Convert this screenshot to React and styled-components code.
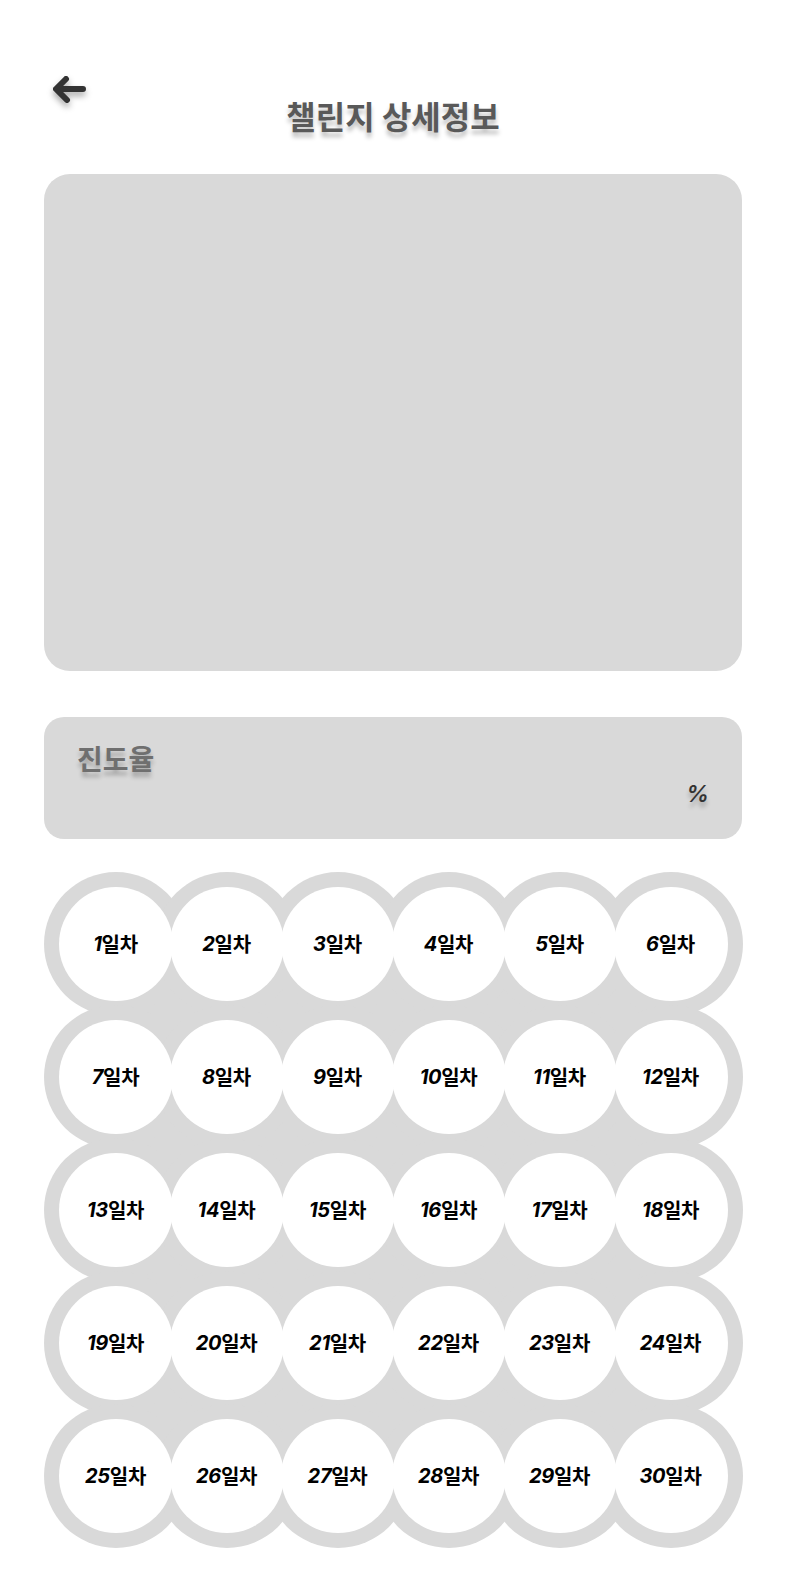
import React from "react";
import styled, { createGlobalStyle } from "styled-components";

const GlobalStyle = createGlobalStyle`
  body {
    margin: 0;
    background: #ffffff;
    font-family: "Noto Sans CJK KR", "Noto Sans", sans-serif;
  }
`;

const Page = styled.div`
  width: 786px;
  min-height: 1570px;
  padding: 0 44px;
  box-sizing: border-box;
  overflow: hidden;
`;

const Header = styled.header`
  position: relative;
  height: 174px;
  display: flex;
  justify-content: center;
`;

const BackButton = styled.button`
  position: absolute;
  left: 7px;
  top: 74px;
  width: 36px;
  height: 30px;
  padding: 0;
  border: none;
  background: none;
  cursor: pointer;
  filter: drop-shadow(0 4px 3px rgba(0, 0, 0, 0.35));
`;

const Title = styled.h1`
  margin: 92px 0 0;
  font-size: 32px;
  font-weight: 700;
  line-height: 46px;
  color: #595959;
  text-shadow: 0 5px 4px rgba(0, 0, 0, 0.25);
`;

const ImageCard = styled.div`
  height: 497px;
  border-radius: 26px;
  background: #d9d9d9;
`;

const ProgressCard = styled.div`
  margin-top: 46px;
  height: 122px;
  border-radius: 20px;
  background: #d9d9d9;
  padding: 21px 33px 0;
  box-sizing: border-box;
  display: flex;
  flex-direction: column;
`;

const ProgressLabel = styled.span`
  font-size: 28px;
  font-weight: 700;
  line-height: 40px;
  color: #6f6f6f;
  text-shadow: 0 5px 4px rgba(0, 0, 0, 0.25);
`;

const Percent = styled.span`
  align-self: flex-end;
  margin-top: 1px;
  font-family: "Inter", "Liberation Sans", sans-serif;
  font-style: italic;
  font-weight: 600;
  font-size: 23px;
  line-height: 30px;
  color: #333333;
  text-shadow: 0 5px 4px rgba(0, 0, 0, 0.25);
`;

const DayGrid = styled.div`
  margin-top: 38px;
  padding: 0 16px;
  display: grid;
  grid-template-columns: repeat(6, 111px);
  grid-auto-rows: 133px;
  background-image: linear-gradient(#d9d9d9, #d9d9d9);
  background-repeat: no-repeat;
  background-position: 71.5px 66.5px;
  background-size: 555px 532px;
`;

const DayRing = styled.div`
  margin: -5.5px -16.5px;
  height: 144px;
  border-radius: 50%;
  background: #d9d9d9;
  display: flex;
  align-items: center;
  justify-content: center;
`;

const DayInner = styled.div`
  position: relative;
  width: 114px;
  height: 114px;
  border-radius: 50%;
  background: #ffffff;
  display: flex;
  align-items: center;
  justify-content: center;
  font-size: 20px;
  font-weight: 700;
  color: #000000;
  letter-spacing: -0.3px;
`;

const DayNum = styled.span`
  font-family: "Inter", "Liberation Sans", sans-serif;
  font-style: italic;
  font-weight: 700;
`;

function BackArrow() {
  return (
    <svg width="36" height="30" viewBox="0 0 36 30" fill="none">
      <path
        d="M32 15H6M15 5L5 15L16 26"
        stroke="#333333"
        strokeWidth="6"
        strokeLinecap="round"
        strokeLinejoin="round"
      />
    </svg>
  );
}

const days = Array.from({ length: 30 }, (_, i) => i + 1);

export default function App() {
  return (
    <>
      <GlobalStyle />
      <Page>
        <Header>
          <BackButton aria-label="뒤로가기">
            <BackArrow />
          </BackButton>
          <Title>챌린지 상세정보</Title>
        </Header>
        <ImageCard />
        <ProgressCard>
          <ProgressLabel>진도율</ProgressLabel>
          <Percent>%</Percent>
        </ProgressCard>
        <DayGrid>
          {days.map((d) => (
            <DayRing key={d}>
              <DayInner>
                <DayNum>{d}</DayNum>일차
              </DayInner>
            </DayRing>
          ))}
        </DayGrid>
      </Page>
    </>
  );
}
